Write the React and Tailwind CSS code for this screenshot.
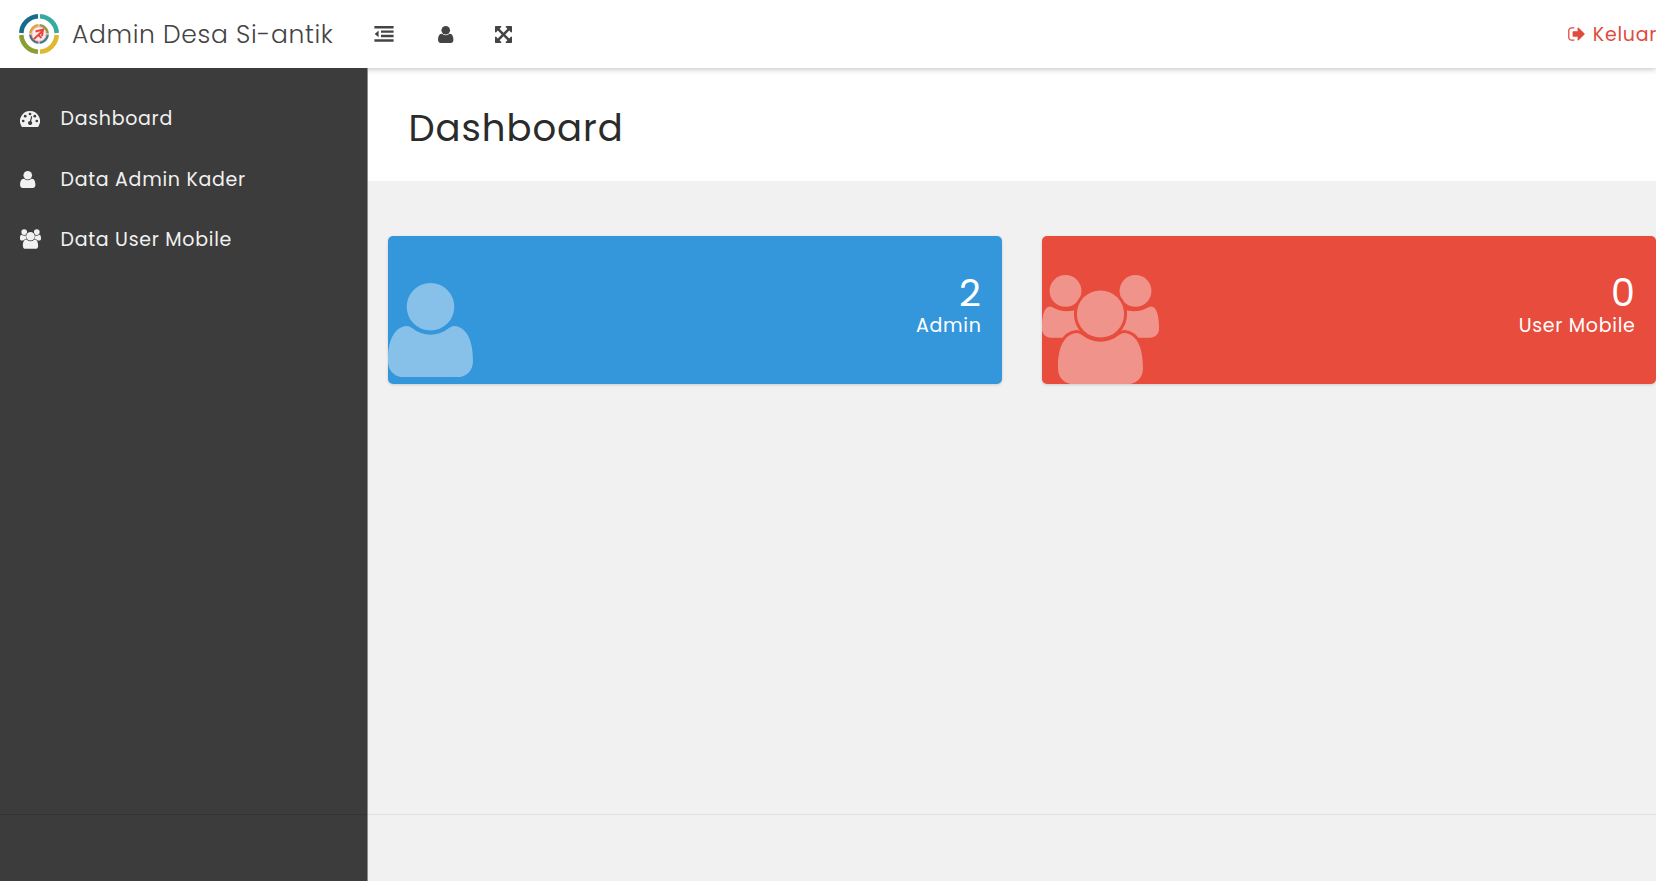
const BODY =
  'M19 43C5 44 0 60 0 76v2C0 88 7 94.2 15 94.2H70C78 94.2 85 88 85 78C85 60 80 44 66 43Q64 43 61 45C50 54 35 54 24 45Q21 43 19 43Z';

function UserIcon({ className }) {
  return (
    <svg viewBox="0 0 85 94.2" className={className} fill="currentColor">
      <circle cx="42.5" cy="23.8" r="23.8" />
      <path d={BODY} />
    </svg>
  );
}

// gap is the stroke class that separates the front person from the two behind
function UsersIcon({ className, gap }) {
  const side =
    'M8 31.6C2 31.6 0 42 0 52v2C0 59 4 62.7 9 62.7H40V32L36 34C28 37.5 18 37 10 32Q9 31.6 8 31.6Z';
  return (
    <svg viewBox="0 0 117 109.2" className={className} fill="currentColor">
      <circle cx="23.5" cy="15.9" r="15.9" />
      <circle cx="93.5" cy="15.9" r="15.9" />
      <path d={side} />
      <path d={side} transform="translate(117 0) scale(-1 1)" />
      <g className={gap} strokeWidth="6" paintOrder="stroke">
        <path d={BODY} transform="translate(16 15)" />
        <circle cx="58.5" cy="39" r="23.6" />
      </g>
    </svg>
  );
}

function GaugeIcon({ className }) {
  return (
    <svg viewBox="0 0 20 16" className={className}>
      <path fill="currentColor" d="M10 0a10 10 0 0 0-8.4 15.4q.3.5.8.5h15.2q.5 0 .8-.5A10 10 0 0 0 10 0Z" />
      <g className="fill-[#3c3c3c]">
        <circle cx="3.2" cy="10" r="1.35" />
        <circle cx="5.2" cy="5.2" r="1.35" />
        <circle cx="10" cy="3" r="1.35" />
        <circle cx="14.8" cy="5.2" r="1.35" />
        <circle cx="16.8" cy="10" r="1.35" />
        <path d="M11.1 5.4a.6.6 0 0 1 1.1.3l-1 4.5a2.1 2.1 0 1 1-1.2-.3Z" />
      </g>
    </svg>
  );
}

function OutdentIcon({ className }) {
  return (
    <svg viewBox="0 0 20 16" className={className} fill="currentColor">
      <path d="M.4 0h19.2v2.5H.4zM7 4.4h12.6v2.4H7zM7 8.8h12.6v2.4H7zM.4 13.2h19.2v2.5H.4zM4.6 4.5v6.7L.7 7.9z" />
    </svg>
  );
}

function ExpandIcon({ className }) {
  return (
    <svg viewBox="128 128 1536 1536" className={className} fill="currentColor">
      <path d="M1411 541l-355 355 355 355 144-144q29-31 70-14 39 17 39 59v448q0 26-19 45t-45 19h-448q-42 0-59-40-17-39 14-69l144-144-355-355-355 355 144 144q31 30 14 69-17 40-59 40h-448q-26 0-45-19t-19-45v-448q0-42 40-59 39-17 69 14l144 144 355-355-355-355-144 144q-19 19-45 19-12 0-24-5-40-17-40-59v-448q0-26 19-45t45-19h448q42 0 59 40 17 39-14 69l-144 144 355 355 355-355-144-144q-31-30-14-69 17-40 59-40h448q26 0 45 19t19 45v448q0 42-39 59-13 5-25 5-26 0-45-19z" />
    </svg>
  );
}

function SignOutIcon({ className }) {
  return (
    <svg viewBox="0 0 17 14" className={className} fill="currentColor">
      <path d="M6.4.8H3.6A2.8 2.8 0 0 0 .8 3.6v6.8a2.8 2.8 0 0 0 2.8 2.8h2.8" fill="none" stroke="currentColor" strokeWidth="1.3" />
      <path d="M16.5 6.5 10.7.7Q9.7.1 9.6 1.2v3H5.2q-.6 0-.6.7v4.2q0 .7.6.7h4.4v3q.1 1.1 1.1.5l5.8-5.8q.5-.5 0-1Z" />
    </svg>
  );
}

function Logo({ className }) {
  return (
    <svg viewBox="0 0 40 40" className={className} fill="none">
      <g strokeWidth="4.6">
        <path d="M2.3 19A17.7 17.7 0 0 1 19 2.3" stroke="#176b8c" />
        <path d="M21 2.3A17.7 17.7 0 0 1 37.7 19" stroke="#35aaa0" />
        <path d="M37.7 21A17.7 17.7 0 0 1 21 37.7" stroke="#dfb92c" />
        <path d="M19 37.7A17.7 17.7 0 0 1 2.3 21" stroke="#8a9f31" />
      </g>
      <g strokeWidth="2.6">
        <path d="M11.3 19.5A8.7 8.7 0 0 1 19.5 11.3" stroke="#d9a63c" />
        <path d="M20.5 11.3A8.7 8.7 0 0 1 28.7 19.5" stroke="#929447" />
        <path d="M28.7 20.5A8.7 8.7 0 0 1 20.5 28.7" stroke="#3c7f94" />
        <path d="M19.5 28.7A8.7 8.7 0 0 1 11.3 20.5" stroke="#556f86" />
      </g>
      <circle cx="20" cy="20" r="7.3" fill="#fdeeec" stroke="#f3958f" strokeWidth=".8" />
      <path d="M15 25 23.5 17M16.5 17.5l7.5-2-1 6.5M19 20.5l3.5 3.5" stroke="#ec4540" strokeWidth="2" />
    </svg>
  );
}

const menu = [
  { label: 'Dashboard', icon: <GaugeIcon className="h-4 w-5" /> },
  { label: 'Data Admin Kader', icon: <UserIcon className="h-[17px] w-[15.5px]" /> },
  { label: 'Data User Mobile', icon: <UsersIcon className="h-[20px] w-[21px]" gap="stroke-[#3c3c3c]" /> },
];

function StatCard({ color, value, label, children }) {
  return (
    <section className={`flex h-[148px] w-[613.5px] shrink-0 justify-between overflow-hidden rounded-[5px] shadow-[0_1px_3px_rgba(0,0,0,0.15)] ${color}`}>
      {children}
      <div className="pt-9 pr-5 text-right text-white">
        <div className="text-[38px] leading-[42px] tracking-[0.7px]">{value}</div>
        <div className="text-[19px] leading-6 tracking-[0.7px]">{label}</div>
      </div>
    </section>
  );
}

export default function App() {
  return (
    <div className="flex h-[881px] w-full flex-col overflow-hidden bg-[#f1f1f1] font-['Poppins','Inter',sans-serif]">
      <header className="z-10 flex h-[68px] shrink-0 items-center bg-white text-[#444] shadow-[0_1px_6px_rgba(0,0,0,0.25)]">
        <div className="flex w-[374px] shrink-0 items-center pl-[19px]">
          <Logo className="size-10" />
          <span className="ml-[13px] pt-px text-[25px] font-light tracking-[0.65px] whitespace-nowrap">Admin Desa Si-antik</span>
        </div>
        <OutdentIcon className="h-4 w-5" />
        <UserIcon className="ml-11 h-[17px] w-[15.5px]" />
        <ExpandIcon className="ml-[41px] size-[17px]" />
        <div className="-mr-px ml-auto flex items-center text-[#e04b3e]">
          <SignOutIcon className="h-3.5 w-[17px]" />
          <span className="ml-2 pt-0.5 text-[19px] tracking-[0.7px]">Keluar</span>
        </div>
      </header>

      <div className="flex flex-1">
        <aside className="z-20 flex w-[368px] shrink-0 flex-col border-r border-[#8c8c8c] bg-[#3c3c3c] text-[#f1f1f1]">
          <nav className="flex h-[747px] flex-col border-b border-[#343434] pt-[21px]">
            {menu.map((item) => (
              <a key={item.label} className="flex h-[60.2px] items-center pl-5">
                <span className="flex w-[40.5px] items-center">{item.icon}</span>
                <span className="pt-px text-[19px] tracking-[0.7px]">{item.label}</span>
              </a>
            ))}
          </nav>
        </aside>
        <main className="flex min-w-0 flex-1 flex-col">
          <div className="flex h-[113px] items-center bg-white pt-2 pl-[40.5px]">
            <h1 className="text-[37px] tracking-[0.95px] text-[#2b2b2b]">Dashboard</h1>
          </div>
          <div className="flex h-[634px] gap-[40.5px] border-b border-[#e0e0e0] pt-[55px] pl-5">
            <StatCard color="bg-[#3597db]" value="2" label="Admin">
              <UserIcon className="mt-[46.5px] ml-[0.4px] h-[94.2px] w-[85px] text-[#87c0e9]" />
            </StatCard>
            <StatCard color="bg-[#e84c3d]" value="0" label="User Mobile">
              <UsersIcon className="mt-[39px] ml-[0.4px] h-[109.2px] w-[117px] text-[#f0948b]" gap="stroke-[#e84c3d]" />
            </StatCard>
          </div>
        </main>
      </div>
    </div>
  );
}
